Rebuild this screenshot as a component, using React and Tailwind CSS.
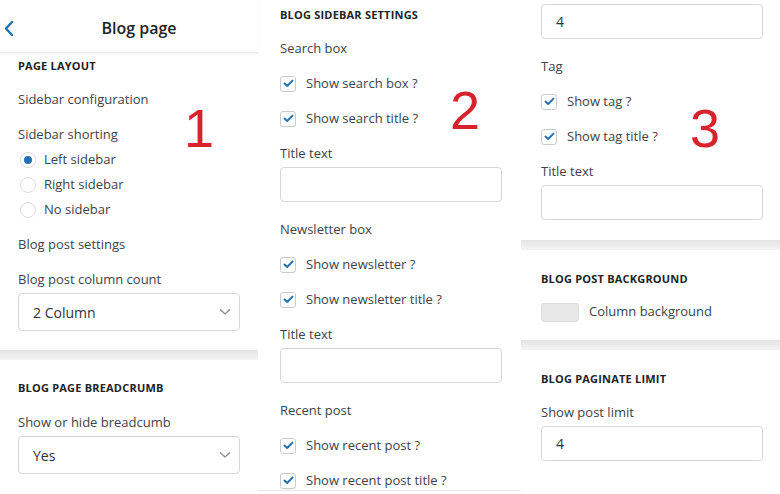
import React from "react";

const font = { fontFamily: '"Open Sans", "Noto Sans", sans-serif' };

function Check({ label }) {
  return (
    <div className="flex h-[35px] shrink-0 items-center">
      <span className="flex h-[16px] w-[16px] items-center justify-center rounded-[3px] border border-[#c9cbcf] bg-white">
        <svg width="11" height="9" viewBox="0 0 11 9" fill="none">
          <path d="M1.5 4.6 L4.2 7 L9.5 1.6" stroke="#2271b1" strokeWidth="2" strokeLinecap="round" strokeLinejoin="round" />
        </svg>
      </span>
      <span className="ml-[10px] text-[13px] text-[#3c434a]">{label}</span>
    </div>
  );
}

function Radio({ label, checked }) {
  return (
    <div className="flex h-[25px] shrink-0 items-center">
      <span className="ml-[2px] flex h-[16px] w-[16px] items-center justify-center rounded-full border border-[#dcdcde] bg-white">
        {checked && <span className="h-[8px] w-[8px] rounded-full bg-[#2271b1]" />}
      </span>
      <span className="ml-[8px] text-[13px] text-[#3c434a]">{label}</span>
    </div>
  );
}

function Label({ children, className = "" }) {
  return <div className={"flex h-[20px] shrink-0 items-center pt-[2px] text-[13px] text-[#3c434a] " + className}>{children}</div>;
}

function Heading({ children, className = "" }) {
  return <div className={"flex h-[16px] shrink-0 items-center text-[11px] font-bold tracking-[0.2px] text-[#1d2327] " + className}>{children}</div>;
}

function Input({ value, className = "" }) {
  return (
    <div className={"flex h-[35px] w-[222px] shrink-0 items-center rounded-[4px] border border-[#d5d6d8] bg-white px-[14px] text-[14px] text-[#2c3338] " + className}>
      {value}
    </div>
  );
}

function Select({ value, className = "" }) {
  return (
    <div className={"flex h-[38px] w-[222px] shrink-0 items-center justify-between rounded-[4px] border border-[#d5d6d8] bg-white pl-[14px] pr-[8px] text-[14px] text-[#2c3338] " + className}>
      <span>{value}</span>
      <svg width="12" height="8" viewBox="0 0 12 8" fill="none">
        <path d="M1.5 1.8 L6 6 L10.5 1.8" stroke="#8c8f94" strokeWidth="1.4" strokeLinecap="round" strokeLinejoin="round" />
      </svg>
    </div>
  );
}

function Band() {
  return <div className="h-[10px] w-full bg-[linear-gradient(#e4e4e4,#f4f4f4)]" />;
}

export default function App() {
  return (
    <div style={font} className="relative flex h-[494px] w-[780px] overflow-hidden bg-white">
      {/* Left panel */}
      <div className="flex w-[258px] shrink-0 flex-col">
        <div className="relative flex h-[53px] shrink-0 items-center justify-center border-b border-[#ececec] pl-[20px] shadow-[0_1px_2px_rgba(0,0,0,0.06)]">
          <svg className="absolute left-[3px] top-[20px]" width="12" height="17" viewBox="0 0 12 17" fill="none">
            <path d="M9 2 L3 8.5 L9 15" stroke="#2271b1" strokeWidth="2.4" strokeLinecap="round" strokeLinejoin="round" />
          </svg>
          <span className="mt-[3px] text-[16px] font-semibold text-[#1d2327]">Blog page</span>
        </div>
        <div className="flex flex-col pl-[18px]">
          <Heading className="mt-[5px]">PAGE LAYOUT</Heading>
          <Label className="mt-[15px]">Sidebar configuration</Label>
          <Label className="mt-[15px]">Sidebar shorting</Label>
          <div className="mt-[3px] flex flex-col">
            <Radio label="Left sidebar" checked />
            <Radio label="Right sidebar" />
            <Radio label="No sidebar" />
          </div>
          <Label className="mt-[12px]">Blog post settings</Label>
          <Label className="mt-[15px]">Blog post column count</Label>
          <Select value="2 Column" className="mt-[4px]" />
        </div>
        <div className="mt-[19px]">
          <Band />
        </div>
        <div className="flex flex-col pl-[18px]">
          <Heading className="mt-[20px]">BLOG PAGE BREADCRUMB</Heading>
          <Label className="mt-[16px]">Show or hide breadcumb</Label>
          <Select value="Yes" className="mt-[4px] h-[37px]" />
        </div>
      </div>

      {/* Middle panel */}
      <div className="h-[491px] w-[263px] shrink-0 overflow-hidden border-b border-[#e4e4e4]">
        <div className="flex flex-col pl-[22px]">
          <Heading className="mt-[7px]">BLOG SIDEBAR SETTINGS</Heading>
          <Label className="mt-[15px]">Search box</Label>
          <div className="mt-[8px] flex flex-col">
            <Check label="Show search box ?" />
            <Check label="Show search title ?" />
          </div>
          <Label className="mt-[7px]">Title text</Label>
          <Input value="" className="mt-[4px]" />
          <Label className="mt-[17px]">Newsletter box</Label>
          <div className="mt-[8px] flex flex-col">
            <Check label="Show newsletter ?" />
            <Check label="Show newsletter title ?" />
          </div>
          <Label className="mt-[7px]">Title text</Label>
          <Input value="" className="mt-[4px]" />
          <Label className="mt-[17px]">Recent post</Label>
          <div className="mt-[8px] flex flex-col">
            <Check label="Show recent post ?" />
            <Check label="Show recent post title ?" />
          </div>
        </div>
      </div>

      {/* Right panel */}
      <div className="flex w-[259px] shrink-0 flex-col">
        <div className="flex flex-col pl-[20px]">
          <Input value="4" className="mt-[4px]" />
          <Label className="mt-[17px]">Tag</Label>
          <div className="mt-[8px] flex flex-col">
            <Check label="Show tag ?" />
            <Check label="Show tag title ?" />
          </div>
          <Label className="mt-[7px]">Title text</Label>
          <Input value="" className="mt-[4px]" />
        </div>
        <div className="mt-[20px]">
          <Band />
        </div>
        <div className="flex flex-col pl-[20px]">
          <Heading className="mt-[21px]">BLOG POST BACKGROUND</Heading>
          <div className="mt-[15px] flex h-[20px] items-center">
            <span className="h-[19px] w-[38px] rounded-[3px] border border-[#dcdcde] bg-[#e8e8e8]" />
            <span className="ml-[10px] text-[13px] text-[#3c434a]">Column background</span>
          </div>
        </div>
        <div className="mt-[18px]">
          <Band />
        </div>
        <div className="flex flex-col pl-[20px]">
          <Heading className="mt-[21px]">BLOG PAGINATE LIMIT</Heading>
          <Label className="mt-[15px]">Show post limit</Label>
          <Input value="4" className="mt-[4px]" />
        </div>
      </div>

      {/* Overlay numbers */}
      <span className="absolute left-[184px] top-[101px] text-[54px] leading-none text-[#d7232c]" style={{ fontFamily: '"Liberation Sans", sans-serif' }}>1</span>
      <span className="absolute left-[450px] top-[83px] text-[54px] leading-none text-[#d7232c]" style={{ fontFamily: '"Liberation Sans", sans-serif' }}>2</span>
      <span className="absolute left-[690px] top-[101px] text-[54px] leading-none text-[#d7232c]" style={{ fontFamily: '"Liberation Sans", sans-serif' }}>3</span>
    </div>
  );
}
